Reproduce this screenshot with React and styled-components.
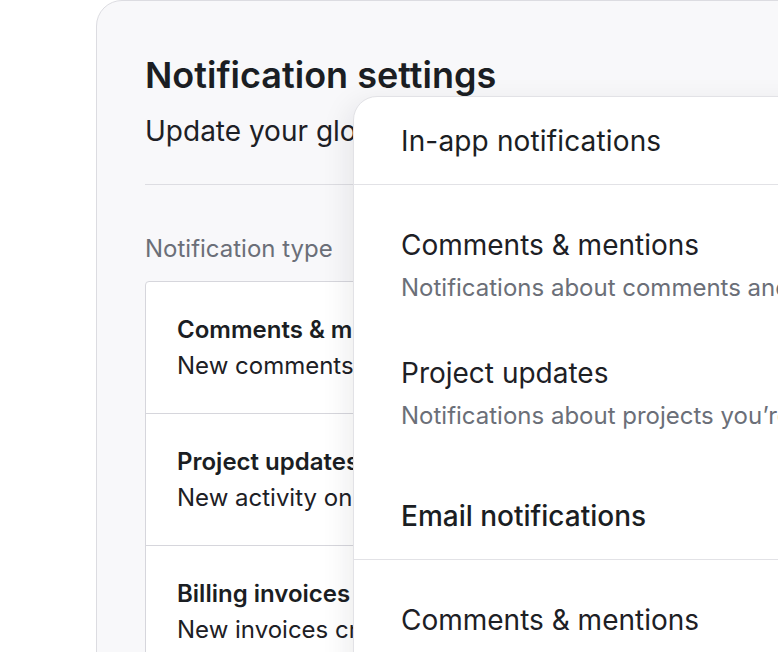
import React from "react";
import styled, { createGlobalStyle } from "styled-components";

const GlobalStyle = createGlobalStyle`
  html, body {
    margin: 0;
    padding: 0;
    background: #ffffff;
    overflow: hidden;
  }
  body {
    font-family: Inter, "Noto Sans", "Liberation Sans", sans-serif;
    color: #1d2025;
    -webkit-font-smoothing: antialiased;
  }
`;

const Stage = styled.div`
  position: relative;
  width: 778px;
  height: 652px;
  overflow: hidden;
  padding-left: 96px;
  box-sizing: border-box;
`;

const SettingsCard = styled.section`
  width: 820px;
  height: 720px;
  box-sizing: border-box;
  background: #f8f8fa;
  border: 1px solid #dcdce1;
  border-radius: 26px 0 0 0;
  padding: 53px 0 0 48px;
`;

const Title = styled.h1`
  margin: 0;
  font-size: 36px;
  line-height: 1.2;
  font-weight: 600;
  color: #1b1e23;
`;

const Subtitle = styled.p`
  margin: 18px 0 0;
  font-size: 28px;
  line-height: 1.2;
  font-weight: 400;
  color: #1d2025;
`;

const Divider = styled.hr`
  margin: 35px 0 0;
  border: none;
  border-top: 1px solid #dddde2;
`;

const Label = styled.div`
  margin-top: 48px;
  font-size: 24px;
  line-height: 32px;
  color: #6b6f78;
`;

const TypeTable = styled.div`
  margin-top: 16px;
  background: #ffffff;
  border: 1px solid #d6d6dc;
  border-radius: 4px 0 0 0;
`;

const TypeRow = styled.div`
  padding: 32px 0 31px 31px;
  border-top: ${(p) => (p.$first ? "none" : "1px solid #d6d6dc")};
`;

const TypeName = styled.div`
  font-size: 24px;
  line-height: 32px;
  font-weight: 600;
  color: #1b1e23;
  white-space: nowrap;
`;

const TypeDesc = styled.div`
  margin-top: 4px;
  font-size: 24px;
  line-height: 32px;
  color: #1d2025;
  white-space: nowrap;
`;

const Panel = styled.section`
  position: absolute;
  left: 353px;
  top: 96px;
  width: 520px;
  height: 640px;
  background: #ffffff;
  border: 1px solid #e2e2e6;
  border-radius: 24px 0 0 0;
  box-shadow: -6px 6px 28px rgba(20, 20, 40, 0.08);
`;

const PanelHeader = styled.div`
  height: 87px;
  display: flex;
  align-items: center;
  padding-left: 47px;
  border-bottom: 1px solid #e2e2e6;
  font-size: 28px;
  font-weight: ${(p) => p.$weight || 400};
  letter-spacing: ${(p) => (p.$weight ? "0" : "0.15px")};
  color: #1b1e23;
  white-space: nowrap;
`;

const ItemList = styled.div`
  display: flex;
  flex-direction: column;
  gap: 45px;
  padding: 40px 0 36px 47px;
`;

const Item = styled.div`
  display: flex;
  flex-direction: column;
  gap: 3px;
  white-space: nowrap;
`;

const ItemTitle = styled.div`
  font-size: 28px;
  line-height: 40px;
  color: #1d2025;
`;

const ItemDesc = styled.div`
  font-size: 24px;
  line-height: 40px;
  color: #6b6f78;
`;

const types = [
  { name: "Comments & mentions", desc: "New comments and mentions on your work" },
  { name: "Project updates", desc: "New activity on projects you follow" },
  { name: "Billing invoices", desc: "New invoices created for your account" },
];

export default function App() {
  return (
    <>
      <GlobalStyle />
      <Stage>
        <SettingsCard>
          <Title>Notification settings</Title>
          <Subtitle>Update your global notification preferences</Subtitle>
          <Divider />
          <Label>Notification type</Label>
          <TypeTable>
            {types.map((t, i) => (
              <TypeRow key={t.name} $first={i === 0}>
                <TypeName>{t.name}</TypeName>
                <TypeDesc>{t.desc}</TypeDesc>
              </TypeRow>
            ))}
          </TypeTable>
        </SettingsCard>

        <Panel>
          <PanelHeader>In-app notifications</PanelHeader>
          <ItemList>
            <Item>
              <ItemTitle>Comments &amp; mentions</ItemTitle>
              <ItemDesc>Notifications about comments and mentions</ItemDesc>
            </Item>
            <Item>
              <ItemTitle>Project updates</ItemTitle>
              <ItemDesc>Notifications about projects you’re following</ItemDesc>
            </Item>
          </ItemList>
          <PanelHeader $weight={500}>Email notifications</PanelHeader>
          <ItemList>
            <Item>
              <ItemTitle>Comments &amp; mentions</ItemTitle>
              <ItemDesc>Notifications about comments and mentions</ItemDesc>
            </Item>
          </ItemList>
        </Panel>
      </Stage>
    </>
  );
}
